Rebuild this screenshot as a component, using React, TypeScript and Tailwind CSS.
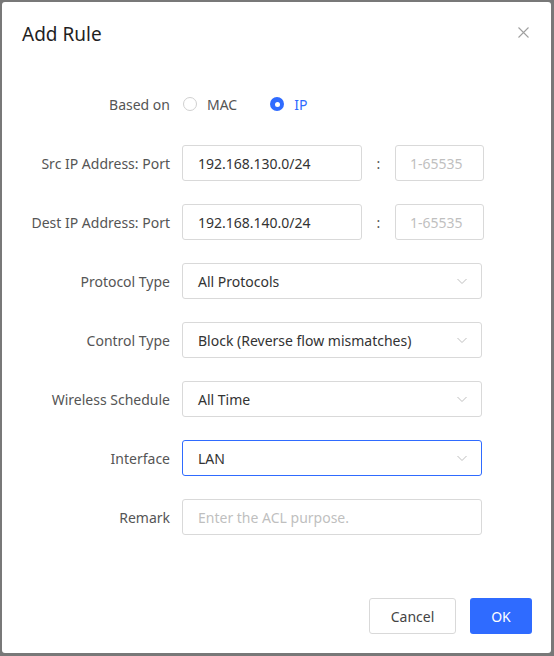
import React from 'react';

const font = { fontFamily: '"Noto Sans", "Liberation Sans", Arial, sans-serif' };

const Label: React.FC<{ text: string }> = ({ text }) => (
  <div className="w-[180px] shrink-0 pr-[12px] text-right text-[14px] text-[#555]">{text}</div>
);

const Chevron = () => (
  <svg width="12" height="7" viewBox="0 0 12 7" className="shrink-0">
    <path d="M1.5 1 L6 5.5 L10.5 1" fill="none" stroke="#bfbfbf" strokeWidth="1" />
  </svg>
);

const Select: React.FC<{ value: string; active?: boolean }> = ({ value, active }) => (
  <div
    className={`flex h-[36px] w-[300px] items-center justify-between rounded-[3px] border bg-white pl-[15px] pr-[13px] text-[14px] text-[#333] ${
      active ? 'border-[#2f6bff]' : 'border-[#d9d9d9]'
    }`}
  >
    <span>{value}</span>
    <Chevron />
  </div>
);

const Row: React.FC<{ label: string; children: React.ReactNode }> = ({ label, children }) => (
  <div className="flex h-[36px] items-center">
    <Label text={label} />
    {children}
  </div>
);

const AddressRow: React.FC<{ label: string; ip: string }> = ({ label, ip }) => (
  <Row label={label}>
    <div className="flex h-[36px] w-[180px] items-center rounded-[3px] border border-[#d9d9d9] pl-[15px] text-[14px] text-[#333]">
      {ip}
    </div>
    <div className="w-[33px] text-center text-[14px] text-[#555]">:</div>
    <div className="flex h-[36px] w-[89px] items-center rounded-[3px] border border-[#d9d9d9] pl-[14px] text-[14px] text-[#bfbfbf]">
      1-65535
    </div>
  </Row>
);

export default function App() {
  return (
    <div className="h-[656px] w-[554px] bg-[#787878] pb-[3px] pl-[2px] pr-[3px] pt-[2px]" style={font}>
      <div className="flex h-full flex-col rounded-[3px] bg-white">
        <div className="flex items-start justify-between pl-[20px] pr-[22px] pt-[18px]">
          <h1 className="text-[19px] leading-[28px] text-[#1f1f1f]">Add Rule</h1>
          <svg width="11" height="11" viewBox="0 0 11 11" className="mt-[7px]">
            <path d="M0.5 0.5 L10.5 10.5 M10.5 0.5 L0.5 10.5" stroke="#a0a0a0" strokeWidth="1.1" />
          </svg>
        </div>

        <div className="mt-[38px] flex flex-col gap-[23px]">
          <Row label="Based on">
            <div className="flex items-center text-[14px]">
              <span className="ml-[1px] h-[14px] w-[14px] rounded-full border border-[#d0d0d0]" />
              <span className="ml-[10px] text-[#555]">MAC</span>
              <span className="ml-[33px] flex h-[14px] w-[14px] items-center justify-center rounded-full bg-[#2f6bff]">
                <span className="h-[5px] w-[5px] rounded-full bg-white" />
              </span>
              <span className="ml-[10px] text-[#2f6bff]">IP</span>
            </div>
          </Row>
          <AddressRow label="Src IP Address: Port" ip="192.168.130.0/24" />
          <AddressRow label="Dest IP Address: Port" ip="192.168.140.0/24" />
          <Row label="Protocol Type">
            <Select value="All Protocols" />
          </Row>
          <Row label="Control Type">
            <Select value="Block (Reverse flow mismatches)" />
          </Row>
          <Row label="Wireless Schedule">
            <Select value="All Time" />
          </Row>
          <Row label="Interface">
            <Select value="LAN" active />
          </Row>
          <Row label="Remark">
            <div className="flex h-[36px] w-[300px] items-center rounded-[3px] border border-[#d9d9d9] pl-[15px] text-[14px] text-[#bfbfbf]">
              Enter the ACL purpose.
            </div>
          </Row>
        </div>

        <div className="mt-auto flex justify-end gap-[14px] pb-[19px] pr-[19px]">
          <button className="h-[36px] w-[87px] rounded-[3px] border border-[#d9d9d9] bg-white text-[14px] text-[#444]">
            Cancel
          </button>
          <button className="h-[36px] w-[62px] rounded-[3px] bg-[#2f6bff] text-[14px] text-white">OK</button>
        </div>
      </div>
    </div>
  );
}
